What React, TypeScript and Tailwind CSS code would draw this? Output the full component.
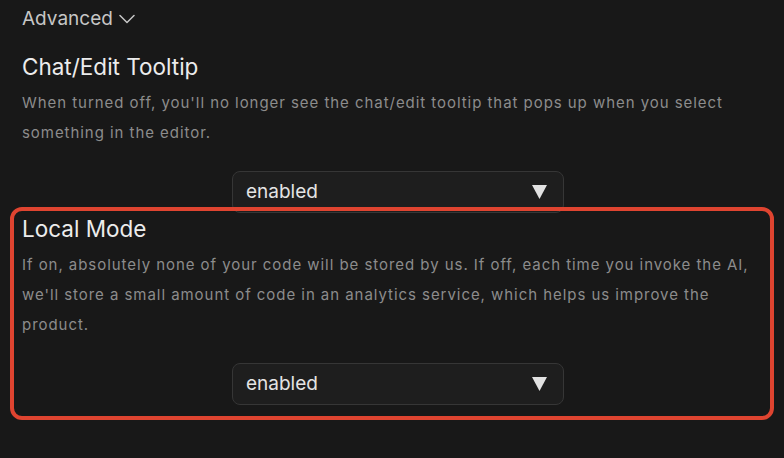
import React from 'react'

const SelectBox = ({ value }: { value: string }) => {
   return (
      <div className="flex justify-center">
         <div className="w-[332px] h-[42px] rounded-[8px] border border-[#363636] bg-[#1e1e1e] flex items-center justify-between pl-[13px] pr-[16px]">
            <span className="text-[19px] text-[#e4e4e4]">{value}</span>
            <svg width="15" height="14" viewBox="0 0 15 14">
               <polygon points="0,0 15,0 7.5,14" fill="#e2e2e2" />
            </svg>
         </div>
      </div>
   )
}

const SettingBlock = ({ title, desc, value }: { title: string, desc: string, value: string }) => {
   return (
      <div>
         <h3 className="text-[22.5px] leading-[30px] text-[#ececec]">{title}</h3>
         <p className="mt-[6px] pr-[14px] text-[15px] leading-[30px] tracking-[0.95px] text-[#8c8c8c]">{desc}</p>
         <div className="mt-[23px]">
            <SelectBox value={value} />
         </div>
      </div>
   )
}

const App = () => {
   return (
      <div className="w-[784px] h-[458px] bg-[#181818] overflow-hidden font-['Inter',sans-serif]">
         <div className="pl-[22px] pr-[10px]">
            <div className="h-[38px] flex items-center gap-[6px] text-[19px] text-[#c6c6c6]">
               <span>Advanced</span>
               <svg width="16" height="10" viewBox="0 0 16 10" fill="none">
                  <path d="M1 1.5 L8 8.5 L15 1.5" stroke="#c6c6c6" strokeWidth="1.5" strokeLinecap="round" strokeLinejoin="round" />
               </svg>
            </div>

            <div className="mt-[14px]">
               <SettingBlock
                  title="Chat/Edit Tooltip"
                  desc="When turned off, you'll no longer see the chat/edit tooltip that pops up when you select something in the editor."
                  value="enabled"
               />
            </div>

            <div className="relative mt-[1px]">
               {/* annotation frame */}
               <div className="absolute -top-[7px] -bottom-[15px] -left-[12px] right-0 rounded-[12px] border-[4px] border-[#df4430] pointer-events-none" />
               <SettingBlock
                  title="Local Mode"
                  desc="If on, absolutely none of your code will be stored by us. If off, each time you invoke the AI, we'll store a small amount of code in an analytics service, which helps us improve the product."
                  value="enabled"
               />
            </div>
         </div>
      </div>
   )
}

export default App
